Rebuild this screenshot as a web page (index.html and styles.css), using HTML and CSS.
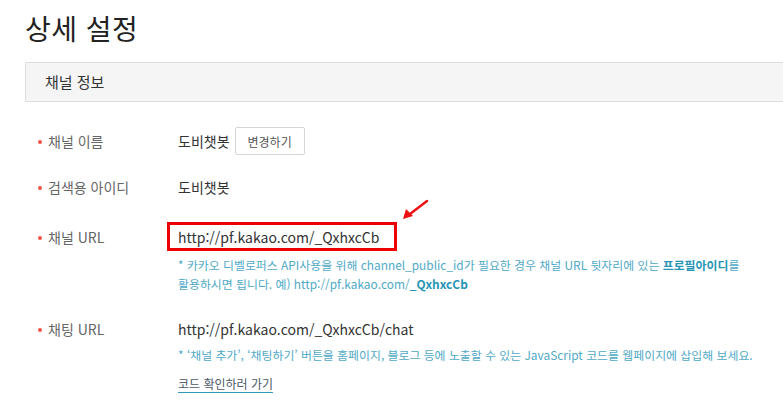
FILE: index.html
```html
<!DOCTYPE html>
<html lang="ko">
<head>
<meta charset="utf-8">
<link rel="stylesheet" href="styles.css">
</head>
<body>
<div class="page">
  <h1 class="title">상세 설정</h1>
  <section class="panel">
    <div class="panel-head">채널 정보</div>
    <div class="rows">
      <div class="row row-name">
        <div class="label">채널 이름</div>
        <div class="value">도비챗봇 <button class="btn">변경하기</button></div>
      </div>
      <div class="row row-id">
        <div class="label">검색용 아이디</div>
        <div class="value">도비챗봇</div>
      </div>
      <div class="row row-url">
        <div class="label">채널 URL</div>
        <div class="value">
          <div class="url-line"><span class="marked">http://pf.kakao.com/_QxhxcCb</span></div>
          <p class="help"><span class="hl">* 카카오 디벨로퍼스 API사용을 위해 channel_public_id가 필요한 경우 채널 URL 뒷자리에 있는 <b>프로필아이디</b>를</span><span class="hl">활용하시면 됩니다. 예) http://pf.kakao.com/<b>_QxhxcCb</b></span></p>
          <svg class="arrow" width="30" height="24" viewBox="0 0 30 24">
            <line x1="27" y1="2" x2="10" y2="15" stroke="#ee1111" stroke-width="2.4" stroke-linecap="round"/>
            <polygon points="3,20 6,10 13,17" fill="#ee1111"/>
          </svg>
        </div>
      </div>
      <div class="row row-chat">
        <div class="label">채팅 URL</div>
        <div class="value">
          <div class="url-line">http://pf.kakao.com/_QxhxcCb/chat</div>
          <p class="help help-chat"><span class="hl">* ‘채널 추가’, ‘채팅하기’ 버튼을 홈페이지, 블로그 등에 노출할 수 있는 JavaScript 코드를 웹페이지에 삽입해 보세요.</span></p>
          <div class="link-line"><a class="link" href="#">코드 확인하러 가기</a></div>
        </div>
      </div>
    </div>
  </section>
</div>
</body>
</html>
```
FILE: styles.css
```css
html, body {
  margin: 0;
  padding: 0;
  overflow: hidden;
  background: #fff;
}
body {
  font-family: "Noto Sans CJK KR", "Noto Sans", sans-serif;
  color: #333;
}
.page {
  padding: 8px 0 0 25px;
}
.title {
  margin: 0;
  font-size: 28px;
  font-weight: 400;
  line-height: 40px;
  color: #222;
  letter-spacing: 0.5px;
}
.panel {
  margin-top: 14px;
}
.panel-head {
  width: 800px;
  height: 38px;
  line-height: 38px;
  background: #f5f5f5;
  border: 1px solid #dedede;
  padding-left: 19px;
  font-size: 15px;
  color: #333;
}
.rows {
  padding-left: 13px;
}
.row {
  display: grid;
  grid-template-columns: 140px 1fr;
}
.label {
  font-size: 14px;
  color: #666;
  line-height: 20px;
  height: 20px;
  position: relative;
  padding-left: 10px;
}
.label::before {
  content: "";
  position: absolute;
  left: 0;
  top: 9px;
  width: 4px;
  height: 4px;
  border-radius: 50%;
  background: #f0533f;
}
.value {
  font-size: 14px;
  color: #333;
  line-height: 20px;
  position: relative;
}
.row-name {
  margin-top: 25px;
  align-items: center;
}
.row-name .value {
  display: flex;
  align-items: center;
  gap: 5px;
}
.btn {
  height: 28px;
  padding: 0 12px;
  border: 1px solid #d6d6d6;
  background: #fff;
  border-radius: 2px;
  font-family: inherit;
  font-size: 12px;
  color: #555;
}
.row-id {
  margin-top: 22px;
}
.row-url {
  margin-top: 30px;
}
.url-line {
  height: 20px;
  line-height: 20px;
  font-size: 14px;
  white-space: nowrap;
}
.marked {
  position: relative;
}
.marked::after {
  content: "";
  position: absolute;
  left: -11px;
  right: -18px;
  top: -5px;
  bottom: -4px;
  border: 3px solid #ee0000;
}
.help {
  margin: 8px 0 0;
  font-size: 11.9px;
  color: #4fa9c6;
}
.hl {
  display: block;
  height: 19px;
  line-height: 19px;
  white-space: nowrap;
}
.help b {
  color: #2795b5;
}
.arrow {
  position: absolute;
  left: 222px;
  top: -28px;
}
.row-chat {
  margin-top: 26px;
}
.help-chat {
  margin-top: 6px;
}
.link-line {
  margin-top: 9px;
  height: 20px;
  line-height: 20px;
}
.link {
  font-size: 12px;
  color: #4a5866;
  text-decoration: underline;
  text-decoration-color: #2f9ab8;
  text-underline-offset: 3px;
}
```
